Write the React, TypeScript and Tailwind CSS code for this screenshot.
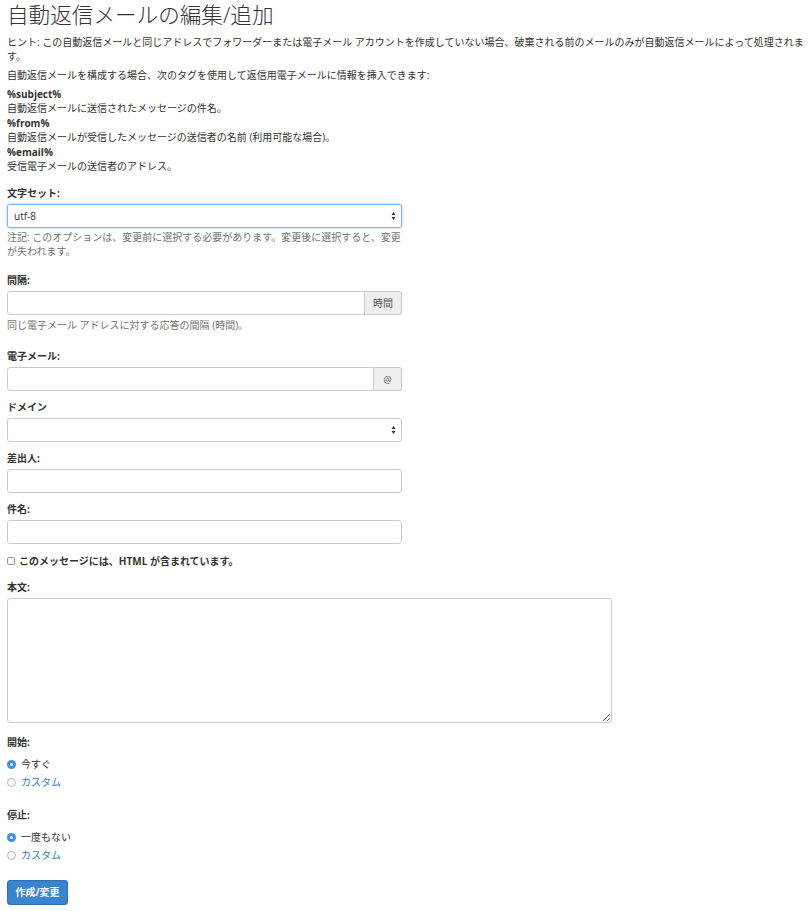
import React from 'react'

const Label = ({ children, className = '' }: { children: React.ReactNode; className?: string }) => (
  <div className={`font-bold text-[10px] leading-[14px] text-[#333] ${className}`}>{children}</div>
)

const SelectArrows = () => (
  <svg width="5" height="9" viewBox="0 0 5 9" className="absolute right-[5px] top-1/2 -translate-y-1/2">
    <path d="M2.5 0.5 L4.5 3.5 L0.5 3.5 Z" fill="#333" />
    <path d="M2.5 8.5 L4.5 5.5 L0.5 5.5 Z" fill="#333" />
  </svg>
)

const Radio = ({ checked, label, link }: { checked?: boolean; label: string; link?: boolean }) => (
  <div className="flex items-center h-[18px] gap-[5px]">
    {checked ? (
      <span className="w-[9px] h-[9px] rounded-full bg-[#3b8ff0] flex items-center justify-center">
        <span className="w-[3px] h-[3px] rounded-full bg-white" />
      </span>
    ) : (
      <span className="w-[9px] h-[9px] rounded-full border border-[#b3b3b3] bg-white" />
    )}
    <span className={`text-[10px] ${link ? 'text-[#3a7bc8]' : 'text-[#333]'}`}>{label}</span>
  </div>
)

const TextInput = () => (
  <input
    type="text"
    className="block w-[395px] h-[24px] border border-[#ccc] rounded-[3px] bg-white px-[6px] text-[10px] outline-none"
  />
)

const tags = [
  { tag: '%subject%', desc: '自動返信メールに送信されたメッセージの件名。' },
  { tag: '%from%', desc: '自動返信メールが受信したメッセージの送信者の名前 (利用可能な場合)。' },
  { tag: '%email%', desc: '受信電子メールの送信者のアドレス。' },
]

export default function App() {
  return (
    <div className="min-h-[911px] bg-white pl-[7px] pr-[4px] text-[#333] font-['Open_Sans','Noto_Sans_CJK_JP',sans-serif]">
      <h1 className="text-[21.6px] leading-[30px] font-light text-[#333]">自動返信メールの編集/追加</h1>

      <p className="mt-[5px] text-[10px] leading-[14px]">
        ヒント: この自動返信メールと同じアドレスでフォワーダーまたは電子メール アカウントを作成していない場合、破棄される前のメールのみが自動返信メールによって処理されます。
      </p>
      <p className="mt-[5px] text-[10px] leading-[14px]">
        自動返信メールを構成する場合、次のタグを使用して返信用電子メールに情報を挿入できます:
      </p>

      <dl className="mt-[5px] text-[10px] leading-[14.4px]">
        {tags.map((t) => (
          <React.Fragment key={t.tag}>
            <dt className="font-bold">{t.tag}</dt>
            <dd>{t.desc}</dd>
          </React.Fragment>
        ))}
      </dl>

      <Label className="mt-[13px]">文字セット:</Label>
      <div className="relative mt-[4px] w-[395px] h-[24px] border border-[#7fb5ec] rounded-[3px] bg-white shadow-[0_0_3px_rgba(102,175,233,0.7)] flex items-center px-[6px] text-[10px]">
        utf-8
        <SelectArrows />
      </div>
      <p className="mt-[3px] w-[395px] text-[10px] leading-[13.5px] text-[#737373]">
        注記: このオプションは、変更前に選択する必要があります。変更後に選択すると、変更が失われます。
      </p>

      <Label className="mt-[15px]">間隔:</Label>
      <div className="mt-[4px] flex w-[395px] h-[24px]">
        <input type="text" className="flex-1 min-w-0 h-full border border-[#ccc] rounded-l-[3px] bg-white px-[6px] text-[10px] outline-none" />
        <span className="w-[37px] h-full flex items-center justify-center border border-l-0 border-[#ccc] rounded-r-[3px] bg-[#eee] text-[10px] text-[#555]">
          時間
        </span>
      </div>
      <p className="mt-[3px] text-[10px] leading-[14px] text-[#737373]">同じ電子メール アドレスに対する応答の間隔 (時間)。</p>

      <Label className="mt-[17px]">電子メール:</Label>
      <div className="mt-[4px] flex w-[395px] h-[24px]">
        <input type="text" className="flex-1 min-w-0 h-full border border-[#ccc] rounded-l-[3px] bg-white px-[6px] text-[10px] outline-none" />
        <span className="w-[28px] h-full flex items-center justify-center border border-l-0 border-[#ccc] rounded-r-[3px] bg-[#eee] text-[9px] text-[#555]">
          @
        </span>
      </div>

      <Label className="mt-[9px]">ドメイン</Label>
      <div className="relative mt-[4px] w-[395px] h-[24px] border border-[#ccc] rounded-[3px] bg-white">
        <SelectArrows />
      </div>

      <Label className="mt-[9px]">差出人:</Label>
      <div className="mt-[4px]">
        <TextInput />
      </div>

      <Label className="mt-[9px]">件名:</Label>
      <div className="mt-[4px]">
        <TextInput />
      </div>

      <div className="mt-[10px] flex items-center gap-[4px] h-[14px]">
        <span className="w-[8px] h-[8px] border border-[#999] rounded-[2px] bg-white" />
        <span className="font-bold text-[10px]">このメッセージには、HTML が含まれています。</span>
      </div>

      <Label className="mt-[12px]">本文:</Label>
      <textarea className="block mt-[4px] w-[605px] h-[125px] border border-[#ccc] rounded-[3px] bg-white outline-none text-[10px] p-[6px]" />

      <Label className="mt-[12px]">開始:</Label>
      <div className="mt-[6px]">
        <Radio checked label="今すぐ" />
        <Radio label="カスタム" link />
      </div>

      <Label className="mt-[17px]">停止:</Label>
      <div className="mt-[6px]">
        <Radio checked label="一度もない" />
        <Radio label="カスタム" link />
      </div>

      <button className="mt-[16px] w-[61px] h-[25px] rounded-[3px] bg-[#3a83cf] border border-[#2f6fb3] text-white font-bold text-[10px]">
        作成/変更
      </button>
    </div>
  )
}
